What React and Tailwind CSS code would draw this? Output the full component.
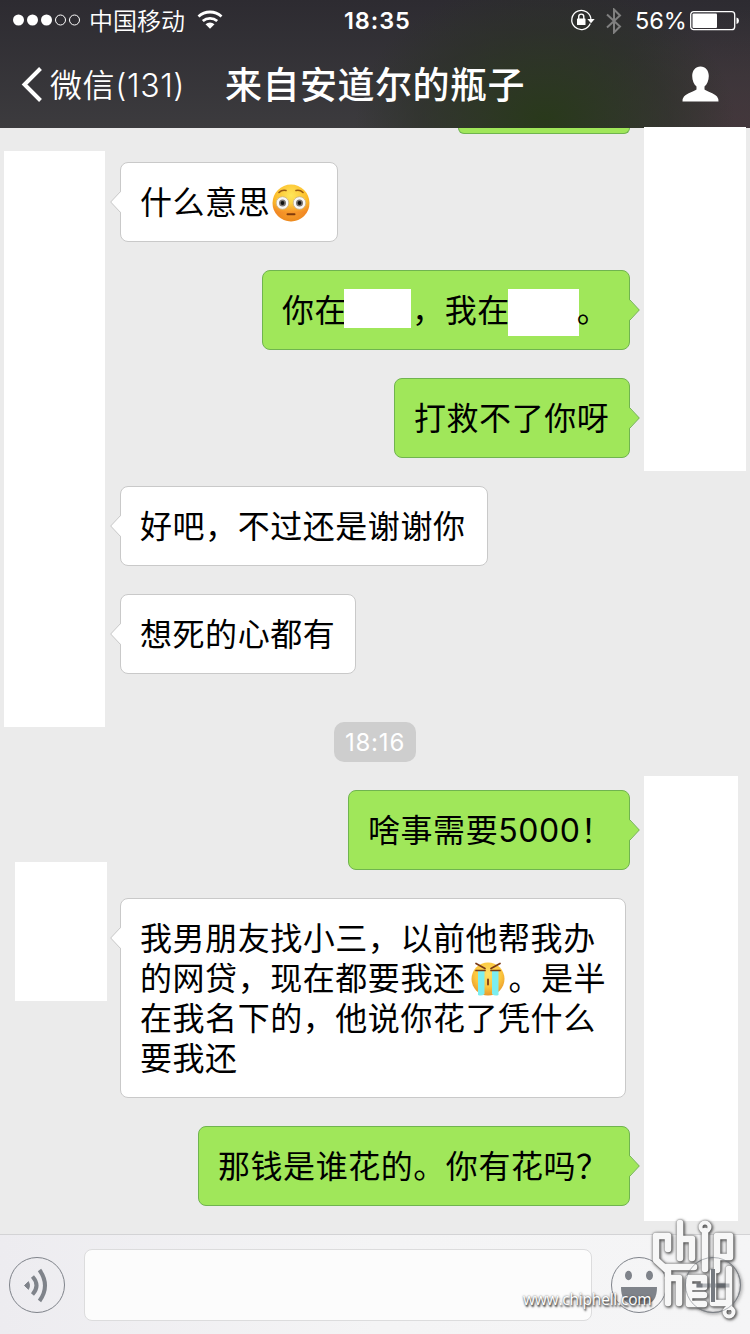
const messages = [
  { id: 1, from: 'them', width: 'w-[218px]', text: '什么意思', emoji: 'flushed' },
  { id: 2, from: 'me', width: 'w-[368px]', masked: true },
  { id: 3, from: 'me', width: 'w-[236px]', text: '打救不了你呀' },
  { id: 4, from: 'them', width: 'w-[368px]', text: '好吧，不过还是谢谢你' },
  { id: 5, from: 'them', width: 'w-[236px]', text: '想死的心都有' },
  { id: 6, time: '18:16' },
  { id: 7, from: 'me', width: 'w-[282px]', text: '啥事需要5000！' },
  { id: 8, from: 'them', width: 'w-[506px]', long: true },
  { id: 9, from: 'me', width: 'w-[432px]', text: '那钱是谁花的。你有花吗？' },
];

const FlushedEmoji = () => (
  <svg className="w-[38px] h-[38px] shrink-0 ml-[2px] mt-px" viewBox="0 0 38 38">
    <defs>
      <radialGradient id="flushed" cx="50%" cy="30%" r="70%">
        <stop offset="0" stopColor="#ffe75a" />
        <stop offset="0.6" stopColor="#fdbf2d" />
        <stop offset="1" stopColor="#ec8a1c" />
      </radialGradient>
      <linearGradient id="blush" x1="0" y1="0" x2="0" y2="1">
        <stop offset="0.5" stopColor="#f0642a" stopOpacity="0" />
        <stop offset="0.75" stopColor="#f0642a" stopOpacity="0.4" />
        <stop offset="1" stopColor="#f0842a" stopOpacity="0.15" />
      </linearGradient>
    </defs>
    <circle cx="19" cy="19" r="18.5" fill="url(#flushed)" />
    <circle cx="19" cy="19" r="18.5" fill="url(#blush)" />
    <path d="M7 8.500q3-3 7-2M24 6.500q4-1 7 2" fill="none" stroke="#9a5a12" strokeWidth="1.600" strokeLinecap="round" />
    <circle cx="10.500" cy="19" r="6.300" fill="#f8f8f8" stroke="#c9b184" strokeWidth="0.800" />
    <circle cx="27.500" cy="19" r="6.300" fill="#f8f8f8" stroke="#c9b184" strokeWidth="0.800" />
    <circle cx="10.500" cy="19" r="3.500" fill="#7b7672" />
    <circle cx="27.500" cy="19" r="3.500" fill="#7b7672" />
    <circle cx="10.500" cy="19" r="1.900" fill="#111" />
    <circle cx="27.500" cy="19" r="1.900" fill="#111" />
    <path d="M15.500 30.200h7" stroke="#7f3a0c" strokeWidth="2" strokeLinecap="round" />
  </svg>
);

const CryEmoji = () => (
  <svg className="inline-block w-[34px] h-[36px] ml-[5px] mr-[4px] align-[-7px]" viewBox="0 0 34 36">
    <defs>
      <radialGradient id="cry" cx="50%" cy="35%" r="65%">
        <stop offset="0" stopColor="#ffe269" />
        <stop offset="0.6" stopColor="#fcc73e" />
        <stop offset="1" stopColor="#e9982a" />
      </radialGradient>
    </defs>
    <circle cx="17" cy="18" r="16.500" fill="url(#cry)" />
    <path d="M7 10h6.500v23q-3 2.500-6.500 1zM21 10h6.500v24q-3.500 1.500-6.500-1z" fill="#7ceef0" />
    <path d="M5 2.500l9 5M29 2.500l-9 5M5 9.500h9M20 9.500h9" stroke="#7a3a16" strokeWidth="1.700" fill="none" strokeLinecap="round" />
    <path d="M17 18.500v5" stroke="#7a3a16" strokeWidth="1.800" strokeLinecap="round" />
  </svg>
);

const Tail = ({ mine }) =>
  mine ? (
    <svg className="absolute -right-[11px] top-[28px] w-[11px] h-[22px]" viewBox="0 0 11 22">
      <path d="M0 0.500L10.300 11L0 21.500z" fill="#a0e75a" />
      <path d="M0.500 0.500L10.300 11L0.500 21.500" fill="none" stroke="#70b44f" />
    </svg>
  ) : (
    <svg className="absolute -left-[11px] top-[28px] w-[11px] h-[22px]" viewBox="0 0 11 22">
      <path d="M11 0.500L0.700 11L11 21.500z" fill="#fff" />
      <path d="M10.500 0.500L0.700 11L10.500 21.500" fill="none" stroke="#c9c9c9" />
    </svg>
  );

const Bubble = ({ message }) => {
  const mine = message.from === 'me';
  const color = mine ? 'self-end bg-[#a0e75a] border-[#70b44f]' : 'self-start bg-white border-[#c9c9c9]';

  return (
    <div className={`relative border rounded-lg pl-[19px] pt-[20px] pb-[18px] text-[32px] leading-[40px] tracking-[0.55px] text-black whitespace-nowrap ${message.width} ${color}`}>
      {/* Tail goes first so its base only covers the border */}
      <Tail mine={mine} />
      <div className={`absolute top-[30px] w-[2px] h-[18px] ${mine ? '-right-px bg-[#a0e75a]' : '-left-px bg-white'}`} />
      {message.masked && (
        <div className="flex items-start h-[40px]">
          <span>你在</span>
          <span className="bg-white w-[67px] h-[39px] -mt-[2px] -ml-[3px]" />
          <span className="ml-px">，我在</span>
          <span className="bg-white w-[71px] h-[47px] -mt-[2px] -ml-[2px] -mr-[2px]" />
          <span>。</span>
        </div>
      )}
      {message.long && (
        <div>
          我男朋友找小三，以前他帮我办
          <br />
          的网贷，现在都要我还
          <CryEmoji />
          。是半
          <br />
          在我名下的，他说你花了凭什么
          <br />
          要我还
        </div>
      )}
      {message.text && (
        <div className="flex h-[40px]">
          <span>{message.text}</span>
          {message.emoji === 'flushed' && <FlushedEmoji />}
        </div>
      )}
    </div>
  );
};

const StatusBar = () => (
  <div className="flex items-center h-[40px] text-white">
    <svg className="w-[68px] h-[12px] ml-[12px]" viewBox="0 0 68 12">
      <circle cx="6.500" cy="6" r="5.500" fill="#fff" />
      <circle cx="20.500" cy="6" r="5.500" fill="#fff" />
      <circle cx="34.500" cy="6" r="5.500" fill="#fff" />
      <circle cx="48.500" cy="6" r="5" fill="none" stroke="#fff" />
      <circle cx="62.500" cy="6" r="5" fill="none" stroke="#fff" />
    </svg>
    <span className="w-[97px] ml-[9px] mt-[3px] text-[24px] leading-[40px] font-[350] whitespace-nowrap">中国移动</span>
    <svg className="w-[26px] h-[20px] ml-[11px]" viewBox="0 0 26 20">
      <path d="M1.500 6.500a17 17 0 0 1 23 0M5.800 11a11 11 0 0 1 14.400 0" fill="none" stroke="#fff" strokeWidth="2.800" />
      <path d="M8.500 14.200a7 7 0 0 1 9 0L13 18.800z" fill="#fff" />
    </svg>
    <span className="w-[70px] ml-[121px] mt-[2px] text-[23.500px] font-semibold tracking-[0.9px] whitespace-nowrap">18:35</span>
    <svg className="w-[26px] h-[24px] ml-[156px]" viewBox="0 0 26 24">
      <path d="M20.300 15.600A9.600 9.600 0 1 1 21 12" fill="none" stroke="#fff" strokeWidth="1.300" />
      <path d="M17.300 11h7.400L21 15.300z" fill="#fff" />
      <rect x="7" y="10.500" width="8.500" height="6.500" rx="0.600" fill="#fff" />
      <path d="M8.700 11V8.700a2.550 2.550 0 0 1 5.100 0V11" fill="none" stroke="#fff" strokeWidth="1.400" />
    </svg>
    <svg className="w-[16px] h-[26px] ml-[10px] mt-px" viewBox="0 0 16 26">
      <path d="M1 6.500L14 18.500L8 24.500V1.500L14 7.500L1 19.500" fill="none" stroke="#808080" strokeWidth="2" />
    </svg>
    <span className="w-[50px] ml-[13px] mt-[2px] text-[23.500px] whitespace-nowrap">56%</span>
    <svg className="w-[50px] h-[20px] ml-[5px] mt-px" viewBox="0 0 50 20">
      <rect x="0.700" y="0.700" width="44" height="18" rx="3" fill="none" stroke="#fff" strokeWidth="1.300" />
      <rect x="2.500" y="2.500" width="24.500" height="14.500" rx="1" fill="#fff" />
      <path d="M46.500 6.500q2.500 0.500 2.500 3.200t-2.500 3.200z" fill="#fff" />
    </svg>
  </div>
);

const Header = () => (
  <header className="h-[128px] bg-[radial-gradient(ellipse_190px_140px_at_545px_120px,#29391bff_0%,#2a361fc0_35%,#2b31258c_65%,#2c302a00_100%),radial-gradient(ellipse_150px_120px_at_740px_128px,#45363bcc_0%,#45363b00_100%),linear-gradient(to_bottom,#2d2b31,#3c3b3e)]">
    <StatusBar />
    <div className="flex items-center h-[88px] text-white">
      <svg className="w-[22px] h-[36px] ml-[21px]" viewBox="0 0 22 36">
        <path d="M19.500 2.500L3.500 18.500L19.500 34.500" fill="none" stroke="#fff" strokeWidth="4" />
      </svg>
      <span className="w-[175px] ml-[7px] mt-[3px] text-[32px] leading-[40px] font-[350] tracking-[0.6px] whitespace-nowrap">微信(131)</span>
      <h1 className="w-[457px] mt-[4px] text-[37px] leading-[40px] font-medium tracking-[0.5px] whitespace-nowrap">来自安道尔的瓶子</h1>
      <svg className="w-[37px] h-[36px]" viewBox="0 0 37 36">
        <path d="M18.500 0.500c5 0 8.300 4 8.300 9.500 0 4.500-1.800 8.500-4.300 10.500v3c3 2.200 9 3.500 12.500 7q1.600 2 1.500 5H0.500q-0.200-3 1.500-5c3.500-3.500 9.500-4.800 12.500-7v-3c-2.500-2-4.300-6-4.300-10.500 0-5.500 3.300-9.500 8.300-9.500z" fill="#fff" />
      </svg>
    </div>
  </header>
);

const Watermark = () => (
  <div className="absolute left-[520px] top-[1214px] w-[230px] h-[120px]">
    <span className="absolute left-[3px] top-[74px] font-['Open_Sans','Noto_Sans',sans-serif] text-[15.500px] leading-[22px] font-medium text-white tracking-[-0.200px] [text-shadow:1px_2px_2px_#333,0_0_2px_#555]">
      www.chiphell.com
    </span>
    <svg className="absolute left-[124px] top-0 w-[106px] h-[120px] [filter:drop-shadow(1px_1px_1.500px_#555)_drop-shadow(0_0_1px_#777)]" viewBox="0 0 106 120">
      <g fill="none" stroke="#f7f7f7" strokeWidth="6.500" strokeLinecap="round" strokeLinejoin="round">
        <path d="M24 35V22H12V46L24 57V89" />
        <path d="M21 53H50" />
        <path d="M24 64H35V89" />
        <path d="M36 9V44M36 25H48V44" />
        <path d="M61 17V55" />
        <path d="M73 56V22H86V43H74" />
        <path d="M60 81H45V64H60V73H47M45 81V90H60" />
        <path d="M69 58V89H84M85 55V93" />
        <circle cx="61" cy="13" r="4.500" strokeWidth="4" />
        <circle cx="85" cy="98" r="4.500" strokeWidth="4" />
      </g>
      {/* Plus button showing through the mark */}
      <circle cx="69" cy="71" r="27.500" fill="none" stroke="#7f838a" strokeOpacity="0.6" />
      <path d="M69 55v33M52.500 71.500h33" stroke="#626870" strokeWidth="4" strokeOpacity="0.45" />
      <path d="M69 55v33M52.500 71.500h6" stroke="#4c5259" strokeWidth="4" strokeOpacity="0.6" />
    </svg>
  </div>
);

const InputBar = () => (
  <footer className="flex items-center h-[100px] border-t border-[#d3d3d5] bg-linear-to-r from-[#edecf0] via-[#f4f4f5] to-[#f5f5f6]">
    <svg className="w-[56px] h-[56px] ml-[9px] mt-px" viewBox="0 0 56 56">
      <circle cx="28" cy="28" r="27.500" fill="none" stroke="#7f838a" />
      <path d="M15.500 28.500L19.500 24.700q2 3.800 0 7.600z" fill="#7f838a" stroke="#7f838a" />
      <path d="M23.500 19.500q8 9 0 18M30.500 13q11 15.500 0 31" fill="none" stroke="#7f838a" strokeWidth="4" />
    </svg>
    <div className="w-[508px] h-[72px] ml-[19px] rounded-lg border border-[#dcdcdd] bg-[#fcfcfc]" />
    <svg className="w-[56px] h-[56px] ml-[19px] mt-px" viewBox="0 0 56 56">
      <circle cx="28" cy="28" r="27.500" fill="none" stroke="#7f838a" />
      <ellipse cx="17.500" cy="18.500" rx="3.500" ry="4.700" fill="#7f838a" />
      <ellipse cx="38.500" cy="18.500" rx="3.500" ry="4.700" fill="#7f838a" />
      <path d="M10 30h36q0 16-11 17H21Q10 46 10 30z" fill="#7f838a" />
    </svg>
    <svg className="w-[56px] h-[56px] ml-[18px] mt-px" viewBox="0 0 56 56">
      <circle cx="28" cy="28" r="27.500" fill="none" stroke="#7f838a" />
      <path d="M28 12v33M11.500 28.500h33" stroke="#626870" strokeWidth="4" />
    </svg>
  </footer>
);

export default function App() {
  return (
    <div className="relative w-[750px] h-[1334px] overflow-hidden bg-[#ebebeb] font-['Inter','Noto_Sans_CJK_SC',sans-serif]" lang="zh-CN">
      <Header />

      <main className="flex h-[1106px]">
        {/* Left avatar column */}
        <div className="w-[120px] shrink-0">
          <div className="w-[101px] h-[576px] mt-[23px] ml-[4px] bg-white" />
          <div className="w-[92px] h-[139px] mt-[135px] ml-[15px] bg-white" />
        </div>

        <div className="flex flex-col gap-[28px] w-[510px] shrink-0">
          <div className="self-end w-[172px] h-[6px] rounded-b-lg border border-t-0 border-[#70b44f] bg-[#a0e75a]" />
          {messages.map((message) =>
            message.time ? (
              <div key={message.id} className="self-center w-[82px] h-[40px] mt-[20px] rounded-[10px] bg-[#cecece] text-center text-white text-[24px] leading-[42px] tracking-[0.8px]">
                {message.time}
              </div>
            ) : (
              <Bubble key={message.id} message={message} />
            )
          )}
        </div>

        {/* Right avatar column */}
        <div className="w-[120px] shrink-0 pl-[14px]">
          <div className="w-[102px] h-[344px] -mt-px bg-white" />
          <div className="w-[94px] h-[445px] mt-[305px] bg-white" />
        </div>
      </main>

      <InputBar />
      <Watermark />
    </div>
  );
}
